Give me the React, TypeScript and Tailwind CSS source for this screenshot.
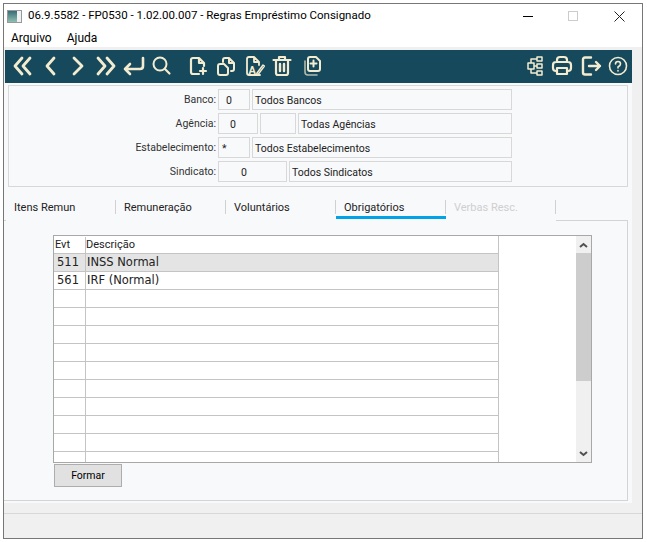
const icon = "fill-none stroke-[#f3ecd0] stroke-[2.2]";

function Ico({ w = 20, children }: { w?: number; children: React.ReactNode }) {
  return (
    <svg width={w} height={24} viewBox={`0 0 ${w} 24`} className={icon} strokeLinecap="round" strokeLinejoin="round">
      {children}
    </svg>
  );
}

const fields = [
  { label: "Banco:", boxes: [{ w: "w-[32px]", t: "0", c: "pl-[7px]" }, { w: "w-[260px]", t: "Todos Bancos", c: "pl-[2px]" }] },
  { label: "Agência:", boxes: [{ w: "w-[40px]", t: "0", c: "pl-[11px]" }, { w: "w-[36px]", t: "", c: "" }, { w: "w-[214px]", t: "Todas Agências", c: "pl-[2px]" }] },
  { label: "Estabelecimento:", boxes: [{ w: "w-[32px]", t: "*", c: "pl-[3px]" }, { w: "w-[260px]", t: "Todos Estabelecimentos", c: "pl-[2px]" }] },
  { label: "Sindicato:", boxes: [{ w: "w-[69px]", t: "0", c: "pl-[22px]" }, { w: "w-[223px]", t: "Todos Sindicatos", c: "pl-[2px]" }] },
];

const tabs = [
  { t: "Itens Remun", c: "w-[108px] pl-[6px] text-[#222]" },
  { t: "Remuneração", c: "w-[110px] pl-[8px] text-[#222]" },
  { t: "Voluntários", c: "w-[110px] pl-[8px] text-[#222]" },
  { t: "Obrigatórios", c: "w-[110px] pl-[8px] text-[#222]" },
  { t: "Verbas Resc.", c: "w-[110px] pl-[8px] text-[#cfcfcf]" },
];

const rows = [
  ["511", "INSS Normal"],
  ["561", "IRF (Normal)"],
  ["", ""], ["", ""], ["", ""], ["", ""], ["", ""], ["", ""], ["", ""], ["", ""], ["", ""],
];

export default function App() {
  return (
    <div className="h-[542px] w-[647px] overflow-hidden bg-white pl-[3px] pt-[3px] font-['Roboto',sans-serif] text-[11px] text-[#222]">
      <div className="flex h-[536px] w-[640px] flex-col border border-[#777] bg-[#f0f0f0]">
        <div className="flex h-[24px] shrink-0 items-center bg-white pl-[3px] text-[11.5px] text-black">
          <span className="mr-[6px] flex h-[13px] w-[15px] border border-[#999] bg-[#eef0f2]">
            <span className="h-full w-[9px] bg-gradient-to-b from-[#3b6b78] to-[#8fc0b0]" />
          </span>
          <span>06.9.5582 - FP0530 - 1.02.00.007 - Regras Empréstimo Consignado</span>
          <span className="ml-auto flex items-center">
            <span className="mr-[35px] h-[1px] w-[10px] bg-black" />
            <span className="mr-[36px] h-[10px] w-[10px] border border-[#ccc]" />
            <svg width="11" height="11" viewBox="0 0 11 11" className="mr-[17px] stroke-[#222]"><path d="M.5.5l10 10M10.5.5l-10 10" /></svg>
          </span>
        </div>

        <div className="flex h-[19px] shrink-0 items-center gap-[15px] bg-white pl-[7px] text-[12px] text-black">
          <span>Arquivo</span>
          <span>Ajuda</span>
        </div>

        <div className="h-[3px] shrink-0" />

        <div className="ml-[1px] flex h-[33px] w-[627px] shrink-0 items-center bg-[#17495c] pb-[1px] pl-[7px]">
          <Ico w={20}><path d="M10 4 3 12l7 8M18 4l-7 8 7 8" strokeWidth="2.800" /></Ico>
          <div className="w-[12px]" />
          <Ico w={13}><path d="M10 4 3 12l7 8" strokeWidth="2.800" /></Ico>
          <div className="w-[14px]" />
          <Ico w={14}><path d="m3 4 8 8-8 8" strokeWidth="2.800" /></Ico>
          <div className="w-[11px]" />
          <Ico w={20}><path d="m2 4 7 8-7 8M11 4l7 8-7 8" strokeWidth="2.800" /></Ico>
          <div className="w-[6px]" />
          <Ico w={24}><path d="M21 4v8q0 3-3 3H3M8 10l-5 5 5 5" strokeWidth="2.600" /></Ico>
          <div className="w-[6px]" />
          <Ico w={20}><circle cx="8" cy="10" r="6.500" strokeWidth="2" /><path d="m13 15 4.500 4.500" /></Ico>
          <div className="w-[16px]" />
          <Ico w={20}><path d="M11 20H5q-2 0-2-2V6q0-2 2-2h6l5 5v3M11 4v5h5M12 17h6M15 14v6" /></Ico>
          <div className="w-[8px]" />
          <Ico w={20}><path d="M7 8V6q0-2 2-2h4l5 5v6q0 2-2 2h-1M13 4v5h5M2 12q0-2 2-2h4l4 4v5q0 2-2 2H4q-2 0-2-2z" strokeWidth="2" /></Ico>
          <div className="w-[9px]" />
          <Ico w={20}><path d="M14 11V8L9 3H4Q2 3 2 5v14q0 2 2 2h11M9 3v5h5" strokeWidth="1.800" /><path d="m12 19 6-8 1.500 1-6 8-2 .5z" strokeWidth="1.400" /><text x="3.500" y="19.500" className="fill-[#f3ecd0] stroke-none text-[11px] font-bold">A</text></Ico>
          <div className="w-[7px]" />
          <Ico w={20}><path d="M1.500 6h17M7 5V3h6v2M4 6v13q0 2 2 2h8q2 0 2-2V6" /><path d="M8 10v7M12 10v7" strokeWidth="2.400" /></Ico>
          <div className="w-[10px]" />
          <Ico w={20}><path d="M8 17h8q2 0 2-2V7l-4-4H8Q6 3 6 5v10q0 2 2 2zM11.500 6.500v6M8.500 9.500h6" strokeWidth="2" /><path d="M3 7v11q0 3 3 3h9" strokeWidth="1.600" opacity=".7" /></Ico>
          <div className="w-[203px]" />
          <Ico w={20}><path d="M12 3h5v4h-5zM12 10h5v4h-5zM12 17h5v4h-5zM3 9h6v6H3zM6 9V5h6M9 12h3M6 15v4h6" strokeWidth="1.500" /></Ico>
          <div className="w-[6px]" />
          <Ico w={22}><path d="M6 8V6q0-3 3-3h4q3 0 3 3v2M6 17H5q-3 0-3-3v-3q0-3 3-3h12q3 0 3 3v3q0 3-3 3h-1M6 14h10v6H6z" strokeWidth="2.200" /></Ico>
          <div className="w-[7px]" />
          <Ico w={22}><path d="M11 3.500H5q-2 0-2 2v13q0 2 2 2h6M9 12h11M16 8l4 4-4 4" strokeWidth="2.400" /></Ico>
          <div className="w-[6px]" />
          <Ico w={20}><circle cx="10" cy="12" r="8.500" strokeWidth="1.600" /><path d="M7.500 10q0-2.500 2.500-2.500t2.500 2.500q0 1.500-2.500 3v1" strokeWidth="1.600" /><path d="M10 16.500v.5" strokeWidth="1.600" /></Ico>
        </div>

        <div className="flex h-[420px] w-[628px] shrink-0 flex-col bg-[#f8f9fb] pb-[2px] pr-[4px] pt-[2px]">
          <div className="ml-[4px] flex h-[102px] shrink-0 flex-col gap-[3px] border border-[#d8d8d8] pl-[2px] pt-[3px] text-[10.500px]">
            {fields.map((f) => (
              <div key={f.label} className="flex h-[21px] items-center">
                <span className="w-[207px] pr-[2px] pt-[1px] text-right text-[#333]">{f.label}</span>
                <div className="flex gap-[2px]">
                  {f.boxes.map((b, i) => (
                    <span key={i} className={`flex h-[21px] items-center border border-[#d8d8d8] bg-[#f8f9fb] pt-[2px] ${b.w} ${b.c}`}>
                      {b.t}
                    </span>
                  ))}
                </div>
              </div>
            ))}
          </div>

          <div className="ml-[4px] mt-[10px] flex h-[23px] shrink-0">
            {tabs.map((tab, i) => (
              <div key={tab.t} className={`relative h-[20px] leading-[21px] ${tab.c}`}>
                {tab.t}
                <span className="absolute right-0 top-[3px] h-[14px] w-[1px] bg-[#d0d0d0]" />
                {i === 3 && <span className="absolute left-0 top-[19px] h-[3px] w-[110px] bg-[#00a2e8]" />}
              </div>
            ))}
          </div>

          <div className="flex h-[1px] shrink-0 justify-between">
            <span className="w-[2px] bg-[#d4d4d4]" />
            <span className="w-[72px] bg-[#d4d4d4]" />
          </div>

          <div className="flex min-h-0 flex-1 flex-col border-b border-r border-[#d4d4d4] pl-[49px]">
            <div className="relative mt-[14px] flex h-[228px] w-[539px] shrink-0 border border-[#a8a8a8] bg-white">
              <div className="flex w-[445px] flex-col border-r border-[#c4c4c4]">
                <div className="flex h-[18px] shrink-0 items-center border-b border-[#c4c4c4] pt-[1px]">
                  <span className="h-full w-[32px] border-r border-[#c4c4c4] pl-[1px]">Evt</span>
                  <span className="pl-[0px]">Descrição</span>
                </div>
                {rows.map((r, i) => (
                  <div key={i} className={`flex h-[18px] shrink-0 border-b border-[#c4c4c4] font-['DejaVu_Sans',sans-serif] text-[11.500px] leading-[17px] ${i === 0 ? "bg-[#e4e4e4]" : ""}`}>
                    <span className="w-[32px] border-r border-[#c4c4c4] pl-[3px]">{r[0]}</span>
                    <span className="pl-[1px]">{r[1]}</span>
                  </div>
                ))}
                <div className="flex-1">
                  <div className="h-full w-[32px] border-r border-[#c4c4c4]" />
                </div>
              </div>
              <div className="absolute right-0 top-0 flex h-full w-[15px] flex-col bg-[#f0f0f0]">
                <svg width="15" height="17" viewBox="0 0 15 17" className="shrink-0 fill-none stroke-[#505050] stroke-[2]"><path d="m4 11 3.500-3 3.500 3" /></svg>
                <div className="h-[128px] shrink-0 bg-[#cdcdcd]" />
                <svg width="15" height="17" viewBox="0 0 15 17" className="mt-auto shrink-0 fill-none stroke-[#505050] stroke-[2]"><path d="m4 7 3.500 3 3.500-3" /></svg>
              </div>
            </div>
            <button className="ml-[1px] mt-[1px] h-[23px] w-[68px] shrink-0 border border-[#adadad] bg-[#e1e1e1] text-[10.500px] text-black">Formar</button>
          </div>
        </div>

        <div className="mt-[10px] h-[1px] shrink-0 bg-[#d8d8d8]" />
      </div>
    </div>
  );
}
